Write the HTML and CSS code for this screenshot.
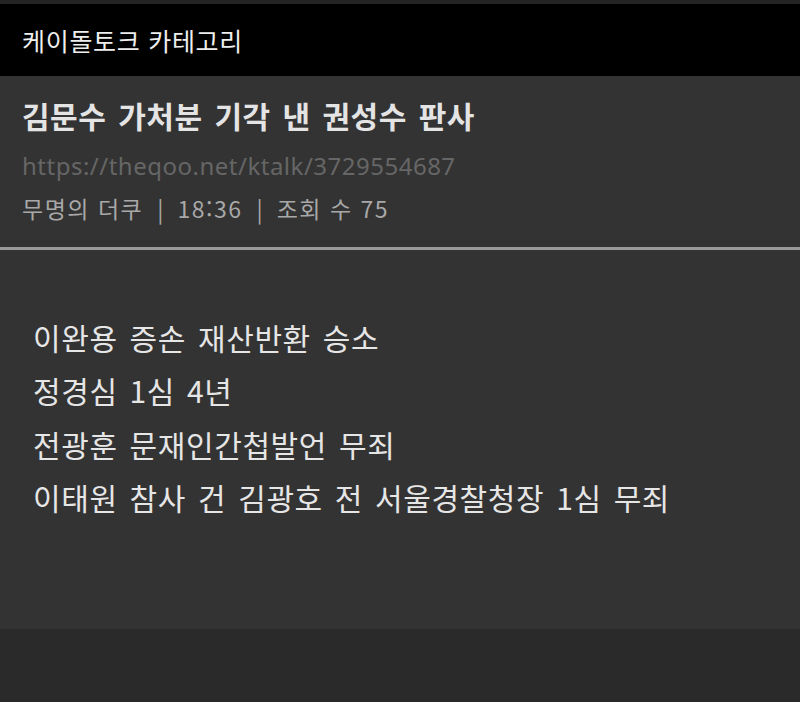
FILE: index.html
```html
<!DOCTYPE html>
<html lang="ko">
<head>
<meta charset="utf-8">
<link rel="stylesheet" href="styles.css">
</head>
<body>
<div class="strip"></div>
<header class="topbar">케이돌토크 카테고리</header>
<section class="head">
  <h1 class="title">김문수 가처분 기각 낸 권성수 판사</h1>
  <div class="url">https://theqoo.net/ktalk/3729554687</div>
  <div class="meta"><span>무명의 더쿠</span><span class="sep">|</span><span>18:36</span><span class="sep">|</span><span>조회 수 75</span></div>
</section>
<article class="body">
  <p>이완용 증손 재산반환 승소</p>
  <p>정경심 1심 4년</p>
  <p>전광훈 문재인간첩발언 무죄</p>
  <p>이태원 참사 건 김광호 전 서울경찰청장 1심 무죄</p>
</article>
<div class="foot"></div>
</body>
</html>
```
FILE: styles.css
```css
html, body {
  margin: 0;
  padding: 0;
  background: #2a2a2a;
  font-family: "Noto Sans CJK KR", "Noto Sans", sans-serif;
}
.strip {
  height: 4px;
  background: #242424;
}
.topbar {
  height: 72px;
  background: #000;
  color: #eeeeee;
  font-size: 25px;
  line-height: 72px;
  padding-left: 22px;
  letter-spacing: 0.7px;
}
.head {
  background: #333333;
  padding: 19px 22px 0;
  box-sizing: border-box;
  border-bottom: 3px solid #9a9a9a;
  height: 174px;
}
.title {
  margin: 0;
  font-size: 30px;
  font-weight: 700;
  color: #e4e4e4;
  line-height: 40px;
  letter-spacing: 0.5px;
  word-spacing: 3px;
}
.url {
  margin-top: 16px;
  font-family: "Noto Sans", sans-serif;
  font-size: 24px;
  line-height: 30px;
  letter-spacing: 0.5px;
  color: #666666;
}
.meta {
  margin-top: 12px;
  font-size: 23px;
  line-height: 30px;
  letter-spacing: 1.5px;
  color: #a8a8a8;
  display: flex;
  gap: 14px;
}
.meta .sep {
  letter-spacing: 0;
}
.body {
  background: #333333;
  height: 379px;
  padding: 61px 33px 0;
  box-sizing: border-box;
  color: #e6e6e6;
  font-size: 30px;
  letter-spacing: 0.6px;
  word-spacing: 3px;
}
.body p {
  margin: 0;
  line-height: 53.3px;
}
.foot {
  height: 74px;
  background: #2a2a2a;
}
```
